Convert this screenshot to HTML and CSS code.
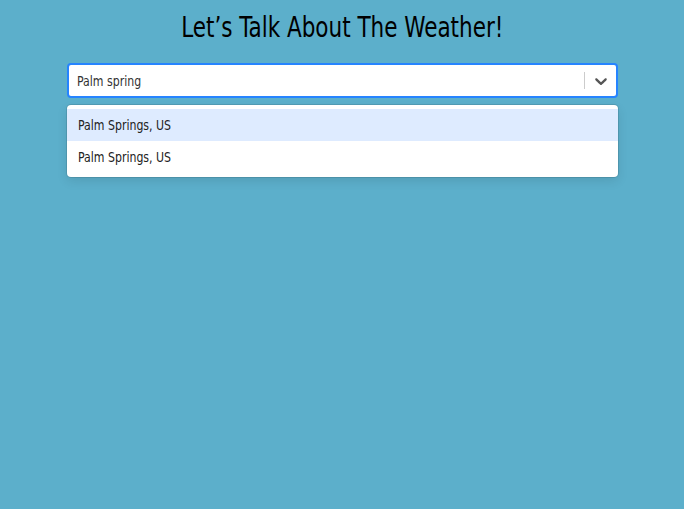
FILE: index.html
```html
<!DOCTYPE html>
<html>
<head>
<meta charset="utf-8">
<link rel="stylesheet" href="styles.css">
</head>
<body>
<div class="app">
  <h1 class="title"><span class="narrow title-text">Let’s Talk About The Weather!</span></h1>
  <div class="select">
    <div class="control">
      <div class="value"><span class="narrow">Palm spring</span></div>
      <div class="indicators">
        <span class="separator"></span>
        <span class="dropdown">
          <svg width="20" height="20" viewBox="0 0 20 20"><path fill="#555" d="M4.516 7.548c0.436-0.446 1.043-0.481 1.576 0l3.908 3.747 3.908-3.747c0.533-0.481 1.141-0.446 1.574 0 0.436 0.445 0.408 1.197 0 1.615-0.406 0.418-4.695 4.502-4.695 4.502-0.217 0.223-0.502 0.335-0.787 0.335s-0.57-0.112-0.789-0.335c0 0-4.287-4.084-4.695-4.502s-0.436-1.17 0-1.615z"/></svg>
        </span>
      </div>
    </div>
    <div class="menu">
      <div class="option focused"><span class="narrow">Palm Springs, US</span></div>
      <div class="option"><span class="narrow">Palm Springs, US</span></div>
    </div>
  </div>
</div>
</body>
</html>
```
FILE: styles.css
```css
html, body {
  margin: 0;
  padding: 0;
  background: #5cafcb;
  height: 100%;
}
body {
  font-family: "DejaVu Sans Condensed", "Roboto", sans-serif;
}
.app {
  display: flex;
  flex-direction: column;
  align-items: center;
  padding-top: 8px;
}
.narrow {
  display: inline-block;
  transform: scaleX(0.87);
  transform-origin: left center;
  white-space: nowrap;
}
.title {
  margin: 0;
  font-size: 29px;
  font-weight: normal;
  color: #000;
  line-height: 38px;
  text-align: center;
}
.title .title-text {
  transform: scaleX(0.825);
  transform-origin: center center;
}
.select {
  width: 551px;
  margin-top: 17px;
  position: relative;
}
.control {
  box-sizing: border-box;
  height: 35px;
  background: #fff;
  border: 2px solid #2684ff;
  border-radius: 4px;
  display: flex;
  align-items: center;
}
.value {
  flex: 1;
  padding-left: 8px;
  font-size: 14px;
  color: #333;
}
.indicators {
  display: flex;
  align-items: center;
  align-self: stretch;
}
.separator {
  width: 1px;
  background: #ccc;
  align-self: stretch;
  margin: 7px 0;
}
.dropdown {
  display: flex;
  padding: 0 5px 0 6px;
  align-items: center;
}
.menu {
  position: absolute;
  top: 42px;
  left: 0;
  right: 0;
  background: #fff;
  border-radius: 4px;
  box-shadow: 0 0 0 1px rgba(0,0,0,0.1), 0 4px 11px rgba(0,0,0,0.1);
  padding: 4px 0;
}
.option {
  height: 32px;
  line-height: 32px;
  padding: 0 11px;
  font-size: 14px;
  color: #222;
}
.option.focused {
  background: #deebff;
}
```
